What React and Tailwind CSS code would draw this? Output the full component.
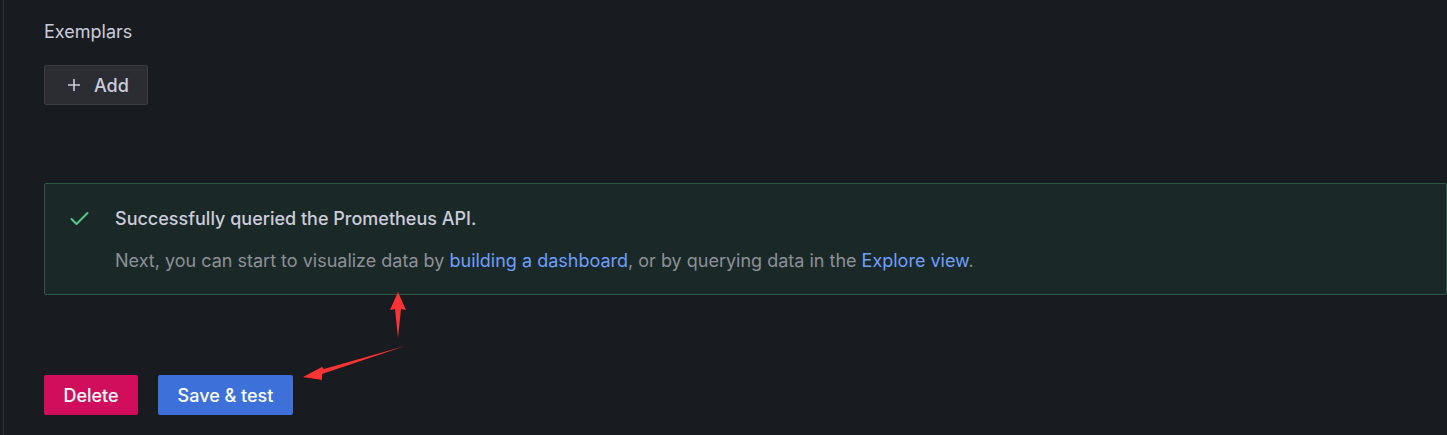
import React from "react";

export default function App() {
  return (
    <div className="relative h-[435px] w-full overflow-hidden bg-[#181b1f] pl-[3px]" style={{ fontFamily: "Inter, 'Noto Sans', sans-serif" }}>
      <div className="h-full border-l border-[#2c2f36] pl-[40px] pt-[19px]">
        <div className="text-[18px] leading-[25px] text-[#ccccdc]">Exemplars</div>
        <button className="mt-[21px] flex h-[40px] w-[104px] items-center gap-[13px] rounded-[2px] border border-[#3a3c43] bg-[#2c2d33] pl-[22px] text-[18px] font-medium text-[#ccccdc]">
          <svg width="14" height="14" viewBox="0 0 14 14" fill="none">
            <path d="M7 1v12M1 7h12" stroke="#ccccdc" strokeWidth="1.6" />
          </svg>
          <span>Add</span>
        </button>
        <div className="mt-[78px] flex h-[112px] rounded-[2px] border border-[#2d5a40] bg-[#1a2927] pl-[25px] pt-[22px]">
          <div className="w-[45px] pt-[5px]">
            <svg width="19" height="15" viewBox="0 0 19 15" fill="none">
              <path d="M1.5 8l5 5L17.5 2" stroke="#56c785" strokeWidth="2" strokeLinecap="round" strokeLinejoin="round" />
            </svg>
          </div>
          <div>
            <div className="text-[18px] font-medium leading-[25px] text-[#ccccdc]">Successfully queried the Prometheus API.</div>
            <div className="mt-[17px] text-[18px] leading-[25px] text-[#8e9099]">
              Next, you can start to visualize data by <span className="text-[#6e9fff]">building a dashboard</span>, or by querying data in the <span className="text-[#6e9fff]">Explore view</span>.
            </div>
          </div>
        </div>
        <div className="mt-[80px] flex gap-[20px]">
          <button className="h-[40px] w-[94px] rounded-[2px] bg-[#d10e5c] text-[18px] font-medium text-white">Delete</button>
          <button className="h-[40px] w-[135px] rounded-[2px] bg-[#3d71d9] text-[18px] font-medium text-white">Save &amp; test</button>
        </div>
      </div>
      <svg className="pointer-events-none absolute left-0 top-0" width="1447" height="435">
        <polygon points="398,292 406,310 401,309 398,338 395,309 390,310" fill="#ff3333" />
        <polygon points="405,346 324,369 322,367 303,377 322,380 322,374" fill="#ff3333" />
      </svg>
    </div>
  );
}
